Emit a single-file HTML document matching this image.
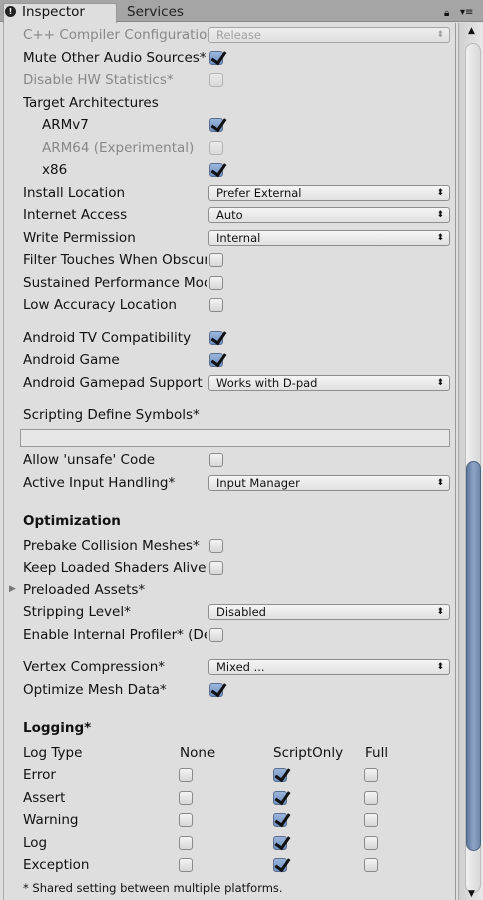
<!DOCTYPE html><html><head><style>
*{margin:0;padding:0;box-sizing:border-box}
body{width:483px;height:900px;background:#dedede;font-family:"DejaVu Sans","Liberation Sans",sans-serif;font-size:13.5px;color:#111;position:relative;overflow:hidden}
.t{position:absolute;left:23px;white-space:nowrap;overflow:hidden;line-height:16px}
.d{color:#888}
.b{font-weight:bold}
.cb{position:absolute;width:14px;height:14px;border:1px solid #8a8a8a;border-radius:3px;background:linear-gradient(#f4f4f4,#d6d6d6)}
.cb.on{background:linear-gradient(#9bb6dc,#6e8fc0);border-color:#5a6f90}
.cb.on::after{content:"";position:absolute;left:4px;top:-3px;width:6px;height:12px;border:solid #111;border-width:0 3px 3px 0;transform:rotate(35deg)}
.cb.dis{opacity:.5}
.dd{position:absolute;left:208px;width:242px;height:16px;border:1px solid #8e8e8e;border-radius:3px;background:linear-gradient(#f5f5f5,#e0e0e0);font-size:11.5px;line-height:14px;padding-left:7px;white-space:nowrap}
.dd::after{content:"⬍";position:absolute;right:5px;top:0;font-size:9px}
</style></head><body>
<div style="position:absolute;left:0;top:0;width:483px;height:22px;background:#a5a5a5;border-bottom:1px solid #888"></div>
<div style="position:absolute;left:3px;top:3px;width:114px;height:20px;background:#dedede;border:1px solid #999;border-bottom:none;border-radius:3px 3px 0 0"></div>
<div style="position:absolute;left:5px;top:6px;width:11px;height:11px;border-radius:50%;background:#222;color:#fff;font-size:8px;font-weight:bold;text-align:center;line-height:11px">!</div>
<div style="position:absolute;left:22px;top:4px;font-size:13.5px">Inspector</div>
<div style="position:absolute;left:127px;top:4px;font-size:13.5px;color:#222">Services</div>
<div style="position:absolute;left:444px;top:8px;font-size:10px">🔒︎</div>
<div style="position:absolute;left:460px;top:7px;font-size:10px">▾≡</div>
<div style="position:absolute;left:3px;top:23px;width:453px;height:877px;border-left:1px solid #aaa;border-right:1px solid #999"></div>
<div style="position:absolute;left:458px;top:23px;width:25px;height:877px;background:linear-gradient(90deg,#cfcfcf,#e8e8e8);border-left:1px solid #aaa"></div>
<div style="position:absolute;left:465px;top:43px;width:16px;height:850px;border-radius:8px;background:linear-gradient(90deg,#f0f0f0,#d8d8d8);border:1px solid #bbb"></div>
<div style="position:absolute;left:466px;top:461px;width:15px;height:390px;border-radius:8px;background:linear-gradient(90deg,#5f779c,#8ea5c6,#6f86aa);border:1px solid #4e6282"></div>
<div style="position:absolute;left:468px;top:26px;font-size:9px">▲</div>
<div style="position:absolute;left:468px;top:889px;font-size:9px">▼</div>

<div class="t d" style="top:27px;width:184px">C++ Compiler Configuration</div><div class="dd" style="top:27px;color:#888;opacity:.7">Release</div>
<div class="t" style="top:50px;width:184px">Mute Other Audio Sources*</div><div class="cb on" style="left:209px;top:51px"></div>
<div class="t d" style="top:72px">Disable HW Statistics*</div><div class="cb dis" style="left:209px;top:73px"></div>
<div class="t" style="top:95px">Target Architectures</div>
<div class="t" style="top:117px;left:42px">ARMv7</div><div class="cb on" style="left:209px;top:118px"></div>
<div class="t d" style="top:140px;left:42px">ARM64 (Experimental)</div><div class="cb dis" style="left:209px;top:141px"></div>
<div class="t" style="top:162px;left:42px">x86</div><div class="cb on" style="left:209px;top:163px"></div>
<div class="t" style="top:185px">Install Location</div><div class="dd" style="top:185px">Prefer External</div>
<div class="t" style="top:207px">Internet Access</div><div class="dd" style="top:207px">Auto</div>
<div class="t" style="top:230px">Write Permission</div><div class="dd" style="top:230px">Internal</div>
<div class="t" style="top:252px;width:184px">Filter Touches When Obscured</div><div class="cb" style="left:209px;top:253px"></div>
<div class="t" style="top:275px;width:184px">Sustained Performance Mode</div><div class="cb" style="left:209px;top:276px"></div>
<div class="t" style="top:297px">Low Accuracy Location</div><div class="cb" style="left:209px;top:298px"></div>
<div class="t" style="top:330px;width:184px">Android TV Compatibility</div><div class="cb on" style="left:209px;top:331px"></div>
<div class="t" style="top:352px">Android Game</div><div class="cb on" style="left:209px;top:353px"></div>
<div class="t" style="top:375px;width:184px">Android Gamepad Support</div><div class="dd" style="top:375px">Works with D-pad</div>
<div class="t" style="top:407px">Scripting Define Symbols*</div>
<div style="position:absolute;left:20px;top:429px;width:430px;height:18px;border:1px solid #999;background:#e6e6e6"></div>
<div class="t" style="top:452px">Allow 'unsafe' Code</div><div class="cb" style="left:209px;top:453px"></div>
<div class="t" style="top:475px">Active Input Handling*</div><div class="dd" style="top:475px">Input Manager</div>
<div class="t b" style="top:513px">Optimization</div>
<div class="t" style="top:538px;width:184px">Prebake Collision Meshes*</div><div class="cb" style="left:209px;top:539px"></div>
<div class="t" style="top:560px;width:184px">Keep Loaded Shaders Alive*</div><div class="cb" style="left:209px;top:561px"></div>
<div style="position:absolute;left:9px;top:584px;font-size:9px;color:#777">▶</div>
<div class="t" style="top:582px">Preloaded Assets*</div>
<div class="t" style="top:604px">Stripping Level*</div><div class="dd" style="top:604px">Disabled</div>
<div class="t" style="top:627px;width:184px">Enable Internal Profiler* (Deprecated)</div><div class="cb" style="left:209px;top:628px"></div>
<div class="t" style="top:659px">Vertex Compression*</div><div class="dd" style="top:659px">Mixed ...</div>
<div class="t" style="top:682px">Optimize Mesh Data*</div><div class="cb on" style="left:209px;top:683px"></div>
<div class="t b" style="top:720px">Logging*</div>
<div class="t" style="top:745px">Log Type</div>
<div class="t" style="top:745px;left:180px">None</div>
<div class="t" style="top:745px;left:273px">ScriptOnly</div>
<div class="t" style="top:745px;left:365px">Full</div>
<div class="t" style="top:767px">Error</div>
<div class="t" style="top:790px">Assert</div>
<div class="t" style="top:812px">Warning</div>
<div class="t" style="top:835px">Log</div>
<div class="t" style="top:857px">Exception</div>
<div class="cb" style="left:179px;top:768px"></div><div class="cb on" style="left:273px;top:768px"></div><div class="cb" style="left:364px;top:768px"></div>
<div class="cb" style="left:179px;top:791px"></div><div class="cb on" style="left:273px;top:791px"></div><div class="cb" style="left:364px;top:791px"></div>
<div class="cb" style="left:179px;top:813px"></div><div class="cb on" style="left:273px;top:813px"></div><div class="cb" style="left:364px;top:813px"></div>
<div class="cb" style="left:179px;top:836px"></div><div class="cb on" style="left:273px;top:836px"></div><div class="cb" style="left:364px;top:836px"></div>
<div class="cb" style="left:179px;top:858px"></div><div class="cb on" style="left:273px;top:858px"></div><div class="cb" style="left:364px;top:858px"></div>
<div class="t" style="top:880px;font-size:11.5px">* Shared setting between multiple platforms.</div>
</body></html>
